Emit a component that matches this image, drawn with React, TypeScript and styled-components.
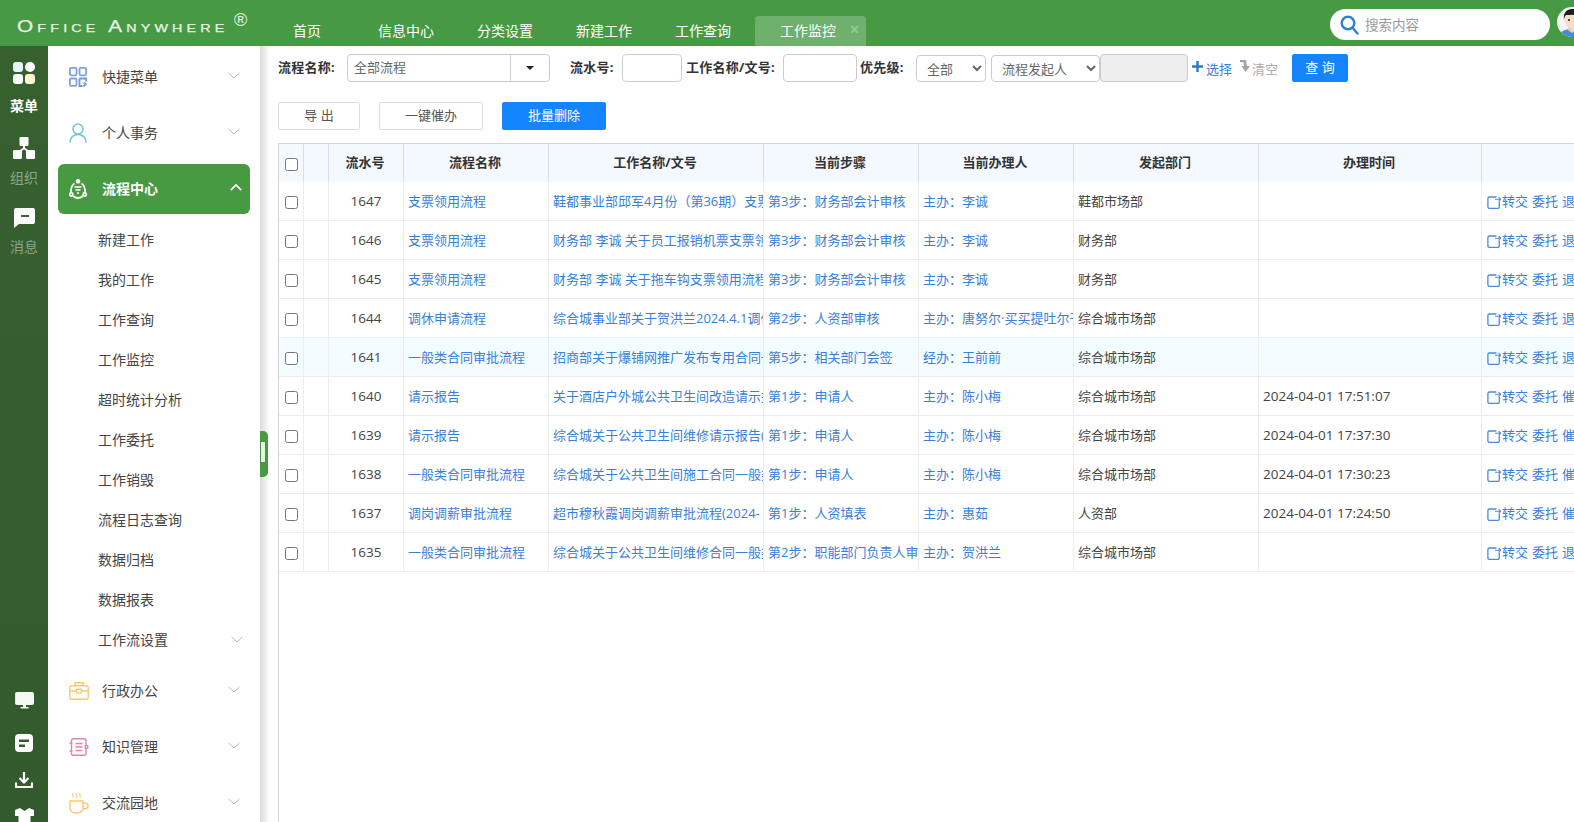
import React from "react";
import styled, { createGlobalStyle } from "styled-components";

const FONT = `"Open Sans","Noto Sans CJK SC","Noto Sans",sans-serif`;

const Global = createGlobalStyle`
  html, body { margin: 0; padding: 0; background: #fff; overflow: hidden; }
  * { box-sizing: border-box; }
  body { font-family: ${FONT}; font-size: 13px; color: #444; }
`;

const Page = styled.div`
  width: 1574px; height: 822px; overflow: hidden; display: flex; flex-direction: column;
`;
const Header = styled.header`
  height: 46px; flex: none; background: #479a43; display: flex; align-items: flex-end;
`;
const Brand = styled.div`
  width: 271.5px; height: 46px; flex: none; padding: 15px 0 0 17px; overflow: hidden;
  display: flex; align-items: flex-start; color: #eaf3e8; font-family: "Liberation Sans", sans-serif;
`;
const BrandName = styled.span`
  font-size: 16px; line-height: 17px; font-variant: small-caps; letter-spacing: 3.2px; white-space: pre;
  transform: scaleX(1.3); transform-origin: left center; width: 217px; flex: none; margin-top: 3px; -webkit-text-stroke: 0.25px #eaf3e8;
`;
const BrandMark = styled.span`font-size: 18px; line-height: 12px; margin-top: -1px;`;
const Nav = styled.nav`display: flex; align-items: stretch; height: 30px; flex: none;`;
const Tab = styled.div<{ $active?: boolean; $first?: boolean }>`
  position: relative; color: #fff; font-size: 14px; line-height: 30px; white-space: nowrap;
  padding: ${(p) => (p.$active ? "0 30px 0 25px" : "0 21.5px")};
  margin-left: ${(p) => (p.$active ? "2.5px" : "0")};
  margin-right: ${(p) => (p.$first ? "14px" : "0")};
  background: ${(p) => (p.$active ? "rgba(255,255,255,.22)" : "transparent")};
  border-radius: 4px 4px 0 0;
`;
const TabClose = styled.span`
  position: absolute; right: 7px; top: -1px; font-size: 16px; font-weight: 700; color: rgba(255,255,255,.3); font-family: "Liberation Sans", sans-serif;
`;
const HeaderRight = styled.div`
  margin-left: auto; height: 46px; width: 244px; flex: none; display: flex; align-items: center; padding-top: 3px; overflow: hidden;
`;
const Search = styled.div`
  width: 220px; height: 31px; flex: none; background: #fff; border-radius: 16px; display: flex; align-items: center; padding: 0 0 0 10px; gap: 6px;
  color: #999; font-size: 13.5px;
`;
const SearchText = styled.span`margin-top: -2px;`;
const Avatar = styled.svg`width: 30px; height: 30px; flex: none; margin-left: 7px; margin-top: -6px;`;

const Body = styled.div`flex: 1; display: flex; min-height: 0;`;
const Rail = styled.aside`
  width: 48px; flex: none; background: linear-gradient(180deg, #37602f, #335a2e); display: flex; flex-direction: column; align-items: center; overflow: hidden;
`;
const RailEntry = styled.div<{ $on?: boolean }>`
  width: 100%; display: flex; flex-direction: column; align-items: center; padding: ${(p) => (p.$on ? "16px 0 1px" : "20px 0 0")};
  font-size: 14px; line-height: 20px; font-weight: ${(p) => (p.$on ? 700 : 400)}; color: ${(p) => (p.$on ? "#fff" : "rgba(255,255,255,.45)")};
  & > svg { flex: none; margin-bottom: ${(p) => (p.$on ? "12px" : "9px")}; }
`;
const RailTools = styled.div`
  margin-top: auto; display: flex; flex-direction: column; align-items: center; gap: 20px; margin-bottom: -4px;
  & > svg:first-child { margin-bottom: 5px; }
`;
const Side = styled.nav`
  width: 212px; flex: none; background: #fff; padding-top: 3px; overflow: hidden; color: #444; font-size: 14px; display: flex; flex-direction: column;
`;
const MenuItem = styled.div<{ $active?: boolean }>`
  height: 50px; flex: none; margin: 3px 10px; padding: 0 10px 0 11px; display: flex; align-items: center; border-radius: 6px;
  background: ${(p) => (p.$active ? "#479942" : "transparent")};
  color: ${(p) => (p.$active ? "#fff" : "#444")};
  font-weight: ${(p) => (p.$active ? 700 : 400)};
  & > svg { margin-top: -3px; }
`;
const MenuIcon = styled.span`width: 33px; flex: none; display: flex; align-items: center;`;
const MenuLabel = styled.span`flex: 1; margin-top: -2px;`;
const SubList = styled.div`padding: 3px 0; flex: none;`;
const SubItem = styled.div`
  height: 40px; padding: 0 17px 2px 50px; display: flex; align-items: center; justify-content: space-between; color: #444;
`;
const Gutter = styled.div`
  width: 10px; flex: none; position: relative; background: linear-gradient(90deg, #dcdcdc, #f1f1f1 60%, #fff);
`;
const Handle = styled.div`
  position: absolute; left: 0; top: 385px; width: 8px; height: 46px; background: #479942; border-radius: 0 5px 5px 0;
  &::after { content: ""; position: absolute; left: 1px; top: 11px; width: 4px; height: 20px; background: #e8f5e6; }
`;
const Main = styled.main`flex: 1; min-width: 0; display: flex; flex-direction: column; padding: 8px 0 0 8px; overflow: hidden;`;
const Filters = styled.div`display: flex; align-items: center; height: 28px; flex: none;`;
const Label = styled.label<{ $w: number; $ml?: number }>`
  width: ${(p) => p.$w}px; margin-left: ${(p) => p.$ml ?? 0}px; flex: none; font-weight: 700; color: #333; white-space: nowrap; margin-top: -4px; letter-spacing: .25px;
`;
const Combo = styled.div`
  width: 203px; height: 28px; flex: none; border: 1px solid #ccc; border-radius: 4px; display: flex; align-items: center; color: #666; padding-left: 6px;
`;
const ComboText = styled.span`flex: 1; margin-top: -3px;`;
const ComboCaret = styled.span`
  width: 39px; height: 100%; border-left: 1px solid #ccc; display: flex; align-items: center; justify-content: center;
  &::after { content: ""; border: 4px solid transparent; border-top: 4px solid #222; border-bottom: 0; }
`;
const TextInput = styled.input<{ $w: number; $off?: boolean }>`
  width: ${(p) => p.$w}px; height: 28px; flex: none; border: 1px solid #ccc; border-radius: 4px; padding: 0; outline: none;
  background: ${(p) => (p.$off ? "#eee" : "#fff")};
`;
const Select = styled.select<{ $w: number; $ml?: number }>`
  width: ${(p) => p.$w}px; margin-left: ${(p) => p.$ml ?? 0}px; height: 27px; flex: none; border: 1px solid #ccc; border-radius: 4px; background: #fff; color: #666;
  font-family: ${FONT}; font-size: 13px; padding: 0 0 0 6px; margin-top: 1px;
`;
const PickLink = styled.span<{ $muted?: boolean; $ml: number }>`
  margin-left: ${(p) => p.$ml}px; display: inline-flex; align-items: center; white-space: nowrap; flex: none; margin-top: 0;
  color: ${(p) => (p.$muted ? "#aaa" : "#3a80d8")};
`;
const Btn = styled.button<{ $primary?: boolean; $w: number; $ml?: number }>`
  width: ${(p) => p.$w}px; margin-left: ${(p) => p.$ml ?? 0}px; height: 28px; flex: none; border-radius: 2px; font-family: ${FONT}; font-size: 13px; padding: 0 0 3px;
  border: 1px solid ${(p) => (p.$primary ? "#1585ff" : "#ddd")};
  background: ${(p) => (p.$primary ? "#1585ff" : "#fff")};
  color: ${(p) => (p.$primary ? "#fff" : "#555")};
`;
const Actions = styled.div`display: flex; height: 28px; margin-top: 20px; flex: none;`;
const TableWrap = styled.div`
  flex: 1; min-height: 0; margin-top: 13px; border-left: 1px solid #d5d5d5; border-top: 1px solid #d5d5d5; overflow: hidden;
`;
const Grid = styled.table`
  table-layout: fixed; width: 1303px; border-collapse: separate; border-spacing: 0;
`;
const Th = styled.th`
  height: 38px; padding: 0 2px 3px 0; background: #f3f9fe; border-right: 1px solid #d8dee3; font-size: 13px; font-weight: 700; color: #333; text-align: center; white-space: nowrap; overflow: hidden;
`;
const CheckTh = styled(Th)`padding: 0;`;
const Tr = styled.tr<{ $hl?: boolean }>`
  background: ${(p) => (p.$hl ? "#f3fcfe" : "#fff")};
`;
const Td = styled.td<{ $center?: boolean; $link?: boolean }>`
  height: 39px; padding: ${(p) => (p.$center ? "0 0 2px" : "0 0 2px 4px")}; border-right: 1px solid #ebeef0; border-bottom: 1px solid #ebeef0;
  text-align: ${(p) => (p.$center ? "center" : "left")}; white-space: nowrap; overflow: hidden;
  color: ${(p) => (p.$link ? "#3a80d8" : "#444")};
`;
const CheckTd = styled(Td)`padding: 0; text-align: center;`;
const Check = styled.input`margin: 0; vertical-align: middle;`;
const Num = styled.span`font-size: 13.5px; vertical-align: -1px;`;
const OpCell = styled.div`display: flex; align-items: center; gap: 4px; color: #3a80d8; padding-left: 1px; white-space: nowrap;`;
const OpFirst = styled.span`display: inline-flex; align-items: center; gap: 1px;
  & > svg { margin-top: 3px; flex: none; }
`;

const Chevron = ({ up, color = "#b9b9b9" }: { up?: boolean; color?: string }) => (
  <svg width="12" height="7" viewBox="0 0 12 7" fill="none" stroke={color} strokeWidth={up ? 1.7 : 1} style={up ? { marginRight: -2 } : undefined}>
    <path d={up ? "M.7 6.2 6 1l5.3 5.2" : "M.5.8 6 6l5.500-5.200"} />
  </svg>
);

const Blocks = () => (
  <svg width="22" height="22" viewBox="0 0 22 22" fill="#fff">
    <rect x="0" y="0" width="10" height="10" rx="3.2" fill="#eaf6ff" />
    <circle cx="17" cy="5" r="5" />
    <rect x="0" y="12" width="10" height="10" rx="3.2" />
    <rect x="12" y="12" width="10" height="10" rx="3.2" fill="#fff3d8" />
  </svg>
);
const OrgIcon = () => (
  <svg width="22" height="22" viewBox="0 0 22 22" fill="#fff">
    <rect x="6.500" y="0" width="9" height="9" rx="1.200" />
    <rect x="0" y="13" width="9" height="9" rx="1.200" />
    <rect x="13" y="13" width="9" height="9" rx="1.200" />
    <path d="M10 8h2v3l5 3-1 1.500-5-3-5 3-1-1.500 5-3z" />
  </svg>
);
const MsgIcon = () => (
  <svg width="21" height="20" viewBox="0 0 21 20" fill="#fff">
    <path fillRule="evenodd" d="M2 0h17a2 2 0 0 1 2 2v12a2 2 0 0 1-2 2H5l-5 4V2a2 2 0 0 1 2-2Zm5 7v2h8V7Z" />
  </svg>
);
const Monitor = () => (
  <svg width="19" height="17" viewBox="0 0 19 17">
    <path fill="#f4f8f4" d="M2 0h15a2 2 0 0 1 2 2v9a2 2 0 0 1-2 2H2a2 2 0 0 1-2-2V2a2 2 0 0 1 2-2Z" />
    <path fill="#cfe9f7" d="M0 3a2 2 0 0 1 1-2v11a2 2 0 0 1-1-1Z" />
    <path fill="#f4f8f4" d="M8 13h3v2h2.500v1.500h-8V15H8Z" />
  </svg>
);
const DocIcon = () => (
  <svg width="18" height="18" viewBox="0 0 18 18">
    <path fill="#fff" fillRule="evenodd" d="M4 0h10a4 4 0 0 1 4 4v10a4 4 0 0 1-4 4H4a4 4 0 0 1-4-4V4a4 4 0 0 1 4-4Zm0 5.500V8h10V5.500Zm0 5V13h6v-2.500Z" />
  </svg>
);
const DownIcon = () => (
  <svg width="18" height="16" viewBox="0 0 18 16" fill="none" stroke="#fff" strokeWidth="2.200">
    <path d="M9 0v10M4.500 6 9 10.500 13.500 6M1 10.500V15h16v-4.500" />
  </svg>
);
const ShirtIcon = () => (
  <svg width="19" height="18" viewBox="0 0 19 18" fill="#fff">
    <path d="M0 2 5 0l4.500 3L14 0l5 2v6h-3.500v10h-12V8H0Z" />
  </svg>
);

const QuickIcon = () => (
  <svg width="18" height="20" viewBox="0 0 18 20" fill="none" stroke="#7ea3de" strokeWidth="1.800">
    <rect x=".9" y=".9" width="6.600" height="7.400" rx="1.200" />
    <rect x="10.500" y=".9" width="6.600" height="7.400" rx="1.200" />
    <rect x=".9" y="11.500" width="6.600" height="7.400" rx="1.200" />
    <path d="M10.500 11.500h6.700v3M10.500 11.500V19h3M17.500 16.500l-3 3" stroke="#6f96d8" />
    <path d="M13 15.500h4v3.500z" fill="#7ea3de" stroke="none" />
  </svg>
);
const PersonIcon = () => (
  <svg width="18" height="20" viewBox="0 0 18 20" fill="none" stroke="#6cc6da" strokeWidth="1.500">
    <circle cx="9" cy="6" r="5" />
    <path d="M1 19.500c0-5 3.500-8 8-8s8 3 8 8" />
  </svg>
);
const FlowIcon = () => (
  <svg width="18" height="20" viewBox="0 0 18 20" fill="none" stroke="#fff" strokeWidth="1.700">
    <circle cx="9" cy="2.300" r="1.500" fill="#fff" />
    <circle cx="2.300" cy="15.500" r="1.600" />
    <circle cx="15.700" cy="15.500" r="1.600" />
    <path d="M5.500 4.500C3 6 1.800 9 2 13.500M12.500 4.500c2.500 1.500 3.700 4.500 3.500 9M4 17c3 2.400 7 2.400 10 0" />
    <path d="M5.500 8h7M6.500 11h5M8 14h2" strokeWidth="1.400" />
  </svg>
);
const CaseIcon = () => (
  <svg width="20" height="18" viewBox="0 0 20 18" fill="none" stroke="#fbc670" strokeWidth="1.400">
    <rect x=".8" y="3.700" width="18.400" height="13.500" rx="1.500" />
    <path d="M6 3.700V.8h8v2.900M.8 9h6.500M12.700 9h6.500" />
    <rect x="7.500" y="7.300" width="5" height="3.800" rx=".8" />
  </svg>
);
const BookIcon = () => (
  <svg width="20" height="18" viewBox="0 0 20 18" fill="none" stroke="#e584a6" strokeWidth="1.400">
    <rect x="2.500" y=".8" width="14.500" height="16.400" rx="2" />
    <path d="M6.500 5.500h7M6.500 9h7M6.500 12.500h7M.5 5h3M.5 13h3" />
    <circle cx="17.500" cy="9" r="1.500" fill="#fff" />
  </svg>
);
const CupIcon = () => (
  <svg width="20" height="22" viewBox="0 0 20 22" fill="none" stroke="#fbc670" strokeWidth="1.400">
    <path d="M1 9h13v6.500a5.500 5.500 0 0 1-5.500 5.500h-2A5.500 5.500 0 0 1 1 15.500ZM14 11h2.200a2.800 2.800 0 0 1 0 5.700H14" />
    <path d="M4 1c-1 1.500 1 2.500 0 5M7.500 1c-1 1.500 1 2.500 0 5M11 1c-1 1.500 1 2.500 0 5" strokeWidth="1" />
  </svg>
);
const SearchGlyph = () => (
  <svg width="19" height="20" viewBox="0 0 19 20" fill="none" stroke="#2f7fd6" strokeWidth="2.400" strokeLinecap="round">
    <circle cx="8" cy="8" r="6.300" />
    <path d="m12.800 13 4.700 5.500" />
  </svg>
);
const Face = () => (
  <Avatar viewBox="0 0 30 30">
    <defs>
      <clipPath id="face-clip"><circle cx="15" cy="15" r="15" /></clipPath>
    </defs>
    <g clipPath="url(#face-clip)">
      <rect width="30" height="30" fill="#f4f6f5" />
      <path d="M2 30c1-6 6-8 13-8s12 2 13 8Z" fill="#3f8fd0" />
      <path d="M11 18h8v5l-4 3-4-3Z" fill="#f1d2b8" />
      <ellipse cx="15" cy="13" rx="7" ry="8.500" fill="#f7dcc6" />
      <path d="M7 13C6 5 10 2 16 2s8 4 7 11c-1-3-2-5-4-6-3 1-8 1-10 1-1 1-2 3-2 5Z" fill="#1d1d1f" />
      <circle cx="12" cy="13" r="1" fill="#222" />
      <circle cx="18" cy="13" r="1" fill="#222" />
    </g>
  </Avatar>
);
const PlusGlyph = () => (
  <svg width="11" height="11" viewBox="0 0 11 11" style={{ marginRight: 3, marginTop: -3 }}>
    <path d="M4.300 0h2.400v4.300H11v2.400H6.700V11H4.300V6.700H0V4.300h4.300Z" fill="#2e78c9" />
  </svg>
);
const ClearGlyph = () => (
  <svg width="10" height="13" viewBox="0 0 10 13" style={{ marginRight: 2, marginTop: -4 }}>
    <path d="M0 0h6l1 6h3L5.500 12 1.500 6H4L3.500 2.500 0 2Z" fill="#a5a5a5" />
  </svg>
);
const ShareGlyph = () => (
  <svg width="14" height="14" viewBox="0 0 14 14" fill="none" stroke="#4a8ad8" strokeWidth="1.300">
    <path d="M12.300 6.500V12a1.500 1.500 0 0 1-1.500 1.400H2.400A1.500 1.500 0 0 1 .9 12V3.500A1.500 1.500 0 0 1 2.400 2h7" />
    <path d="M8 4.300h5.600M11.600 2.200l2.100 2.100-2.100 2.100" strokeWidth="1.100" />
  </svg>
);

const topMenus = [
  { label: "快捷菜单", icon: <QuickIcon /> },
  { label: "个人事务", icon: <PersonIcon /> },
];
const subs = ["新建工作", "我的工作", "工作查询", "工作监控", "超时统计分析", "工作委托", "工作销毁", "流程日志查询", "数据归档", "数据报表"];
const lowerMenus = [
  { label: "行政办公", icon: <CaseIcon /> },
  { label: "知识管理", icon: <BookIcon /> },
  { label: "交流园地", icon: <CupIcon /> },
];

const columns = [25, 25, 75, 145, 215, 155, 155, 185, 223, 100];
const heads = ["", "", "流水号", "流程名称", "工作名称/文号", "当前步骤", "当前办理人", "发起部门", "办理时间", ""];

type Row = { id: number; flow: string; title: string; step: string; owner: string; dept: string; time: string; last: string; hl?: boolean };
const rows: Row[] = [
  { id: 1647, flow: "支票领用流程", title: "鞋都事业部邱军4月份（第36期）支票领用流程", step: "第3步：财务部会计审核", owner: "主办：李诚", dept: "鞋都市场部", time: "", last: "退" },
  { id: 1646, flow: "支票领用流程", title: "财务部 李诚 关于员工报销机票支票领用流程", step: "第3步：财务部会计审核", owner: "主办：李诚", dept: "财务部", time: "", last: "退" },
  { id: 1645, flow: "支票领用流程", title: "财务部 李诚 关于拖车钩支票领用流程申请", step: "第3步：财务部会计审核", owner: "主办：李诚", dept: "财务部", time: "", last: "退" },
  { id: 1644, flow: "调休申请流程", title: "综合城事业部关于贺洪兰2024.4.1调休申请", step: "第2步：人资部审核", owner: "主办：唐努尔·买买提吐尔干", dept: "综合城市场部", time: "", last: "退" },
  { id: 1641, flow: "一般类合同审批流程", title: "招商部关于爆铺网推广发布专用合同一般类", step: "第5步：相关部门会签", owner: "经办：王前前", dept: "综合城市场部", time: "", last: "退", hl: true },
  { id: 1640, flow: "请示报告", title: "关于酒店户外城公共卫生间改造请示报告", step: "第1步：申请人", owner: "主办：陈小梅", dept: "综合城市场部", time: "2024-04-01 17:51:07", last: "催" },
  { id: 1639, flow: "请示报告", title: "综合城关于公共卫生间维修请示报告(2024", step: "第1步：申请人", owner: "主办：陈小梅", dept: "综合城市场部", time: "2024-04-01 17:37:30", last: "催" },
  { id: 1638, flow: "一般类合同审批流程", title: "综合城关于公共卫生间施工合同一般类合同", step: "第1步：申请人", owner: "主办：陈小梅", dept: "综合城市场部", time: "2024-04-01 17:30:23", last: "催" },
  { id: 1637, flow: "调岗调薪审批流程", title: "超市穆秋霞调岗调薪审批流程(2024-", step: "第1步：人资填表", owner: "主办：惠茹", dept: "人资部", time: "2024-04-01 17:24:50", last: "催" },
  { id: 1635, flow: "一般类合同审批流程", title: "综合城关于公共卫生间维修合同一般类合同", step: "第2步：职能部门负责人审批", owner: "主办：贺洪兰", dept: "综合城市场部", time: "", last: "退" },
];

export default function App() {
  return (
    <Page>
      <Global />
      <Header>
        <Brand>
          <BrandName>Office Anywhere</BrandName>
          <BrandMark>®</BrandMark>
        </Brand>
        <Nav>
          <Tab $first>首页</Tab>
          <Tab>信息中心</Tab>
          <Tab>分类设置</Tab>
          <Tab>新建工作</Tab>
          <Tab>工作查询</Tab>
          <Tab $active>
            工作监控
            <TabClose>×</TabClose>
          </Tab>
        </Nav>
        <HeaderRight>
          <Search>
            <SearchGlyph />
            <SearchText>搜索内容</SearchText>
          </Search>
          <Face />
        </HeaderRight>
      </Header>
      <Body>
        <Rail>
          <RailEntry $on><Blocks />菜单</RailEntry>
          <RailEntry><OrgIcon />组织</RailEntry>
          <RailEntry><MsgIcon />消息</RailEntry>
          <RailTools>
            <Monitor />
            <DocIcon />
            <DownIcon />
            <ShirtIcon />
          </RailTools>
        </Rail>
        <Side>
          {topMenus.map((m) => (
            <MenuItem key={m.label}>
              <MenuIcon>{m.icon}</MenuIcon>
              <MenuLabel>{m.label}</MenuLabel>
              <Chevron />
            </MenuItem>
          ))}
          <MenuItem $active>
            <MenuIcon><FlowIcon /></MenuIcon>
            <MenuLabel>流程中心</MenuLabel>
            <Chevron up color="#fff" />
          </MenuItem>
          <SubList>
            {subs.map((s) => (
              <SubItem key={s}>{s}</SubItem>
            ))}
            <SubItem>
              工作流设置
              <Chevron />
            </SubItem>
          </SubList>
          {lowerMenus.map((m) => (
            <MenuItem key={m.label}>
              <MenuIcon>{m.icon}</MenuIcon>
              <MenuLabel>{m.label}</MenuLabel>
              <Chevron />
            </MenuItem>
          ))}
        </Side>
        <Gutter>
          <Handle />
        </Gutter>
        <Main>
          <Filters>
            <Label $w={69}>流程名称:</Label>
            <Combo>
              <ComboText>全部流程</ComboText>
              <ComboCaret />
            </Combo>
            <Label $w={52} $ml={20}>流水号:</Label>
            <TextInput $w={60} />
            <Label $w={97} $ml={4}>工作名称/文号:</Label>
            <TextInput $w={74} />
            <Label $w={56} $ml={3}>优先级:</Label>
            <Select $w={70}><option>全部</option></Select>
            <Select $w={109} $ml={5}><option>流程发起人</option></Select>
            <TextInput $w={88} $off />
            <PickLink $ml={4}><PlusGlyph />选择</PickLink>
            <PickLink $ml={8} $muted><ClearGlyph />清空</PickLink>
            <Btn $primary $w={56} $ml={14}>查 询</Btn>
          </Filters>
          <Actions>
            <Btn $w={82}>导 出</Btn>
            <Btn $w={104} $ml={19}>一键催办</Btn>
            <Btn $primary $w={104} $ml={19}>批量删除</Btn>
          </Actions>
          <TableWrap>
            <Grid>
              <colgroup>
                {columns.map((w, i) => (
                  <col key={i} style={{ width: w }} />
                ))}
              </colgroup>
              <thead>
                <tr>
                  {heads.map((h, i) =>
                    i === 0 ? (
                      <CheckTh key={i}><Check type="checkbox" /></CheckTh>
                    ) : (
                      <Th key={i}>{h}</Th>
                    )
                  )}
                </tr>
              </thead>
              <tbody>
                {rows.map((r) => (
                  <Tr key={r.id} $hl={r.hl}>
                    <CheckTd><Check type="checkbox" /></CheckTd>
                    <Td $center />
                    <Td $center><Num>{r.id}</Num></Td>
                    <Td $link>{r.flow}</Td>
                    <Td $link>{r.title}</Td>
                    <Td $link>{r.step}</Td>
                    <Td $link>{r.owner}</Td>
                    <Td>{r.dept}</Td>
                    <Td><Num>{r.time}</Num></Td>
                    <Td>
                      <OpCell>
                        <OpFirst><ShareGlyph />转交</OpFirst>
                        <span>委托</span>
                        <span>{r.last}</span>
                      </OpCell>
                    </Td>
                  </Tr>
                ))}
              </tbody>
            </Grid>
          </TableWrap>
        </Main>
      </Body>
    </Page>
  );
}
